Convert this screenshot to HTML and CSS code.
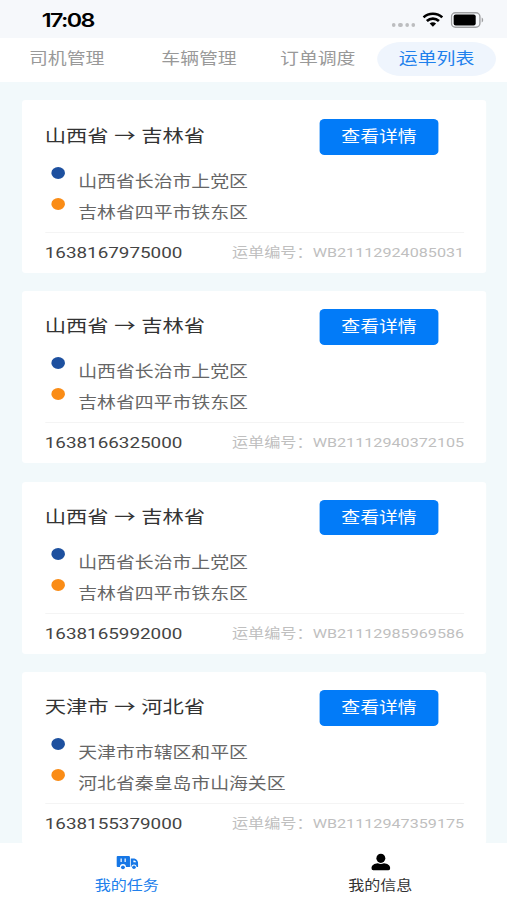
FILE: index.html
```
<!DOCTYPE html>
<html lang="zh-CN">

<head>
    <meta charset="UTF-8">
    <meta name="viewport" content="width=device-width, initial-scale=1.0">
    <title>运单列表</title>
    <link rel="stylesheet" href="styles.css">
</head>

<body>
    <div class="app">
        <div class="status-bar">
            <span class="time">17:08</span>
            <div class="status-icons">
                <div class="signal"><i></i><i></i><i></i><i></i></div>
                <svg class="wifi" viewBox="0 0 20 15" preserveAspectRatio="none" fill="none" stroke="#000" stroke-width="2.6">
                    <path d="M1 5.4C6 .5 14 .5 19 5.4" />
                    <path d="M4.2 9C7.6 5.8 12.4 5.8 15.8 9" />
                    <path d="M6.9 11.6C8.8 9.8 11.2 9.8 13.1 11.6L10 14.8Z" fill="#000" stroke="none" />
                </svg>
                <svg class="battery" viewBox="0 0 33 16" preserveAspectRatio="none">
                    <rect x=".8" y=".8" width="28.4" height="14.4" rx="4" fill="none" stroke="#a0a1a3" stroke-width="1.4" />
                    <rect x="3" y="2.6" width="22" height="10.8" rx="2" />
                    <path d="M31 5.5C33 6.2 33 9.8 31 10.5Z" fill="#a0a1a3" />
                </svg>
            </div>
        </div>
        <div class="tabs">
            <a class="tab">司机管理</a>
            <a class="tab">车辆管理</a>
            <a class="tab">订单调度</a>
            <a class="tab active">运单列表</a>
        </div>
        <div class="list">
            <div class="card">
                <div class="card-head">
                    <h3>山西省<span class="arrow">→</span>吉林省</h3>
                    <button class="btn">查看详情</button>
                </div>
                <p class="place from">山西省长治市上党区</p>
                <p class="place to">吉林省四平市铁东区</p>
                <div class="card-foot">
                    <span class="stamp">1638167975000</span>
                    <span class="number">运单编号：WB21112924085031</span>
                </div>
            </div>
            <div class="card">
                <div class="card-head">
                    <h3>山西省<span class="arrow">→</span>吉林省</h3>
                    <button class="btn">查看详情</button>
                </div>
                <p class="place from">山西省长治市上党区</p>
                <p class="place to">吉林省四平市铁东区</p>
                <div class="card-foot">
                    <span class="stamp">1638166325000</span>
                    <span class="number">运单编号：WB21112940372105</span>
                </div>
            </div>
            <div class="card">
                <div class="card-head">
                    <h3>山西省<span class="arrow">→</span>吉林省</h3>
                    <button class="btn">查看详情</button>
                </div>
                <p class="place from">山西省长治市上党区</p>
                <p class="place to">吉林省四平市铁东区</p>
                <div class="card-foot">
                    <span class="stamp">1638165992000</span>
                    <span class="number">运单编号：WB21112985969586</span>
                </div>
            </div>
            <div class="card">
                <div class="card-head">
                    <h3>天津市<span class="arrow">→</span>河北省</h3>
                    <button class="btn">查看详情</button>
                </div>
                <p class="place from">天津市市辖区和平区</p>
                <p class="place to">河北省秦皇岛市山海关区</p>
                <div class="card-foot">
                    <span class="stamp">1638155379000</span>
                    <span class="number">运单编号：WB21112947359175</span>
                </div>
            </div>
        </div>
        <div class="bottom-nav">
            <a class="nav-item active">
                <svg viewBox="0 0 22 18" preserveAspectRatio="none">
                    <path fill="#1677e6" fill-rule="evenodd" d="M1.4 3H12.4Q13.6 3 13.6 4.2V14H9.6A3 3 0 0 0 3.6 14H1.4Q.2 14 .2 12.8V4.2Q.2 3 1.4 3ZM4.2 5.6V9H5.4V5.6ZM8.2 5.6V9H9.4V5.6Z" />
                    <path fill="#1677e6" fill-rule="evenodd" d="M14.4 5.4H18Q21.8 6.4 21.8 11V14H20.2A2.6 2.6 0 0 0 15 14H14.4ZM17 7.4V9.2H19.8Q19.2 7.6 18 7.4Z" />
                    <circle cx="6.6" cy="14.3" r="1.9" fill="#1677e6" />
                    <circle cx="17.6" cy="14.3" r="1.8" fill="#1677e6" />
                </svg>
                <span>我的任务</span>
            </a>
            <a class="nav-item">
                <svg viewBox="0 0 22 18" preserveAspectRatio="none">
                    <ellipse cx="11" cy="5.3" rx="5" ry="4.6" />
                    <path d="M.5 15.2C.5 12 4 10.4 7.5 10.2Q11 11.8 14.5 10.2C18 10.4 21.5 12 21.5 15.2Q21.5 17.2 19.5 17.2H2.5Q.5 17.2 .5 15.2Z" />
                </svg>
                <span>我的信息</span>
            </a>
        </div>
    </div>
</body>

</html>
```
FILE: styles.css
```
* {
    box-sizing: border-box;
}

body {
    margin: 0;
    width: 507px;
    height: 900px;
    overflow: hidden;
    background-color: #fff;
}

.app {
    display: flex;
    flex-direction: column;
    width: 414px;
    height: 900px;
    transform: scaleX(1.2246);
    transform-origin: 0 0;
    font-family: Roboto, "Noto Sans CJK SC", sans-serif;
    font-size: 15.4px;
    color: #333;
}

.status-bar {
    display: flex;
    justify-content: space-between;
    align-items: center;
    height: 38px;
    padding: 2px 19px 0 34px;
    background-color: #f6f8fb;
}

.time {
    font-family: Inter, sans-serif;
    font-size: 19px;
    font-weight: 600;
    letter-spacing: -1.3px;
    color: #000;
}

.status-icons {
    display: flex;
    align-items: center;
}

.signal {
    display: flex;
    gap: 2px;
    padding-top: 9px;
    margin-right: 6px;
}

.signal i {
    width: 3.2px;
    height: 4px;
    border-radius: 50%;
    background-color: #bcbdbf;
}

.wifi {
    width: 17px;
    height: 15px;
    margin: -1px 6px 0 0;
}

.battery {
    width: 27px;
    height: 16px;
}

.tabs {
    display: flex;
    align-items: center;
    height: 44px;
    padding: 0 9px 2px 6px;
    background-color: #fff;
}

.tab {
    width: 97px;
    height: 34px;
    line-height: 35px;
    border-radius: 20px / 17px;
    text-align: center;
    color: #999;
}

.tab:nth-child(2) {
    margin-left: 11px;
}

.tab.active {
    background-color: #eff5fd;
    color: #2080ec;
}

.list {
    flex: 1;
    min-height: 0;
    overflow: hidden;
    padding: 18px 17px 0 18px;
    background-color: #f2f9fb;
}

.card {
    height: 172px;
    margin-bottom: 18.4px;
    padding: 18px 18px 0 18.5px;
    border-radius: 3px;
    background-color: #fff;
}

.card:first-child {
    height: 173px;
    padding-top: 19px;
}

.card-head {
    display: flex;
    justify-content: space-between;
    height: 46px;
    padding-right: 21px;
}

.card-head h3 {
    margin: 0;
    font-size: 17.4px;
    font-weight: 400;
    line-height: 35px;
    white-space: nowrap;
}

.arrow {
    display: inline-block;
    width: 26.6px;
    text-align: center;
}

.btn {
    width: 97px;
    height: 35.5px;
    padding: 0;
    border: none;
    border-radius: 4px;
    background-color: #027bf8;
    color: #fff;
    font: inherit;
    line-height: 34px;
}

.place {
    display: flex;
    height: 31px;
    margin: 0;
    padding-left: 5.5px;
    line-height: 34px;
    color: #666;
}

.place::before {
    content: "";
    width: 11.4px;
    height: 12px;
    margin: 2px 10.5px 0 0;
    border-radius: 50%;
    background-color: #1d509f;
}

.place.to::before {
    background-color: #fa8c16;
}

.card-foot {
    display: flex;
    justify-content: space-between;
    align-items: center;
    height: 40px;
    margin-top: 5px;
    border-top: 1px solid #f4f4f4;
}

.stamp {
    padding-top: 1px;
    color: #444;
}

.number {
    padding-bottom: 2px;
    font-size: 13.2px;
    color: #bfbfbf;
}

.bottom-nav {
    display: flex;
    height: 57px;
    background-color: #fff;
}

.nav-item {
    display: flex;
    flex: 1;
    flex-direction: column;
    align-items: center;
    padding-top: 10px;
    font-size: 13.1px;
    line-height: 29px;
}

.nav-item svg {
    width: 18px;
    height: 18px;
}

.nav-item.active {
    color: #2080ec;
}

.nav-item:last-child svg {
    width: 16px;
}
```
